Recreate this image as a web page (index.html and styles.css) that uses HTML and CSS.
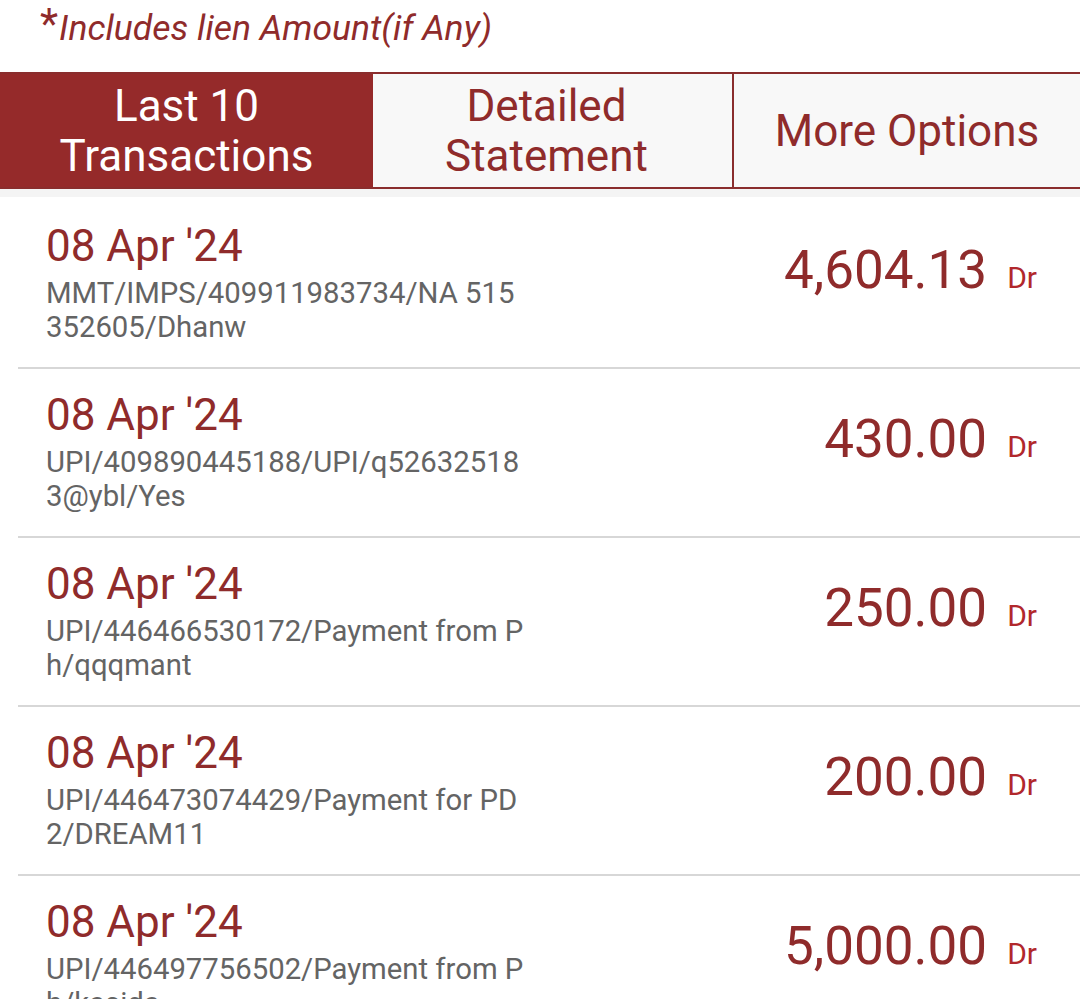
FILE: index.html
```html
<!DOCTYPE html>
<html>
<head>
<meta charset="utf-8">
<link rel="stylesheet" href="styles.css">
</head>
<body>
<div class="note"><span class="star">*</span><span class="note-text">Includes lien Amount(if Any)</span></div>
<div class="tabs">
  <div class="tab active">Last 10<br>Transactions</div>
  <div class="tab mid">Detailed<br>Statement</div>
  <div class="tab last">More Options</div>
</div>
<div class="strip"></div>
<div class="list">
  <div class="row">
    <div class="info">
      <div class="date">08 Apr '24</div>
      <div class="desc">MMT/IMPS/409911983734/NA 515 352605/Dhanw</div>
    </div>
    <div class="amt"><span class="val">4,604.13</span><span class="dr">Dr</span></div>
  </div>
  <div class="row">
    <div class="info">
      <div class="date">08 Apr '24</div>
      <div class="desc">UPI/409890445188/UPI/q526325183@ybl/Yes</div>
    </div>
    <div class="amt"><span class="val">430.00</span><span class="dr">Dr</span></div>
  </div>
  <div class="row">
    <div class="info">
      <div class="date">08 Apr '24</div>
      <div class="desc">UPI/446466530172/Payment from Ph/qqqmant</div>
    </div>
    <div class="amt"><span class="val">250.00</span><span class="dr">Dr</span></div>
  </div>
  <div class="row">
    <div class="info">
      <div class="date">08 Apr '24</div>
      <div class="desc">UPI/446473074429/Payment for PD2/DREAM11</div>
    </div>
    <div class="amt"><span class="val">200.00</span><span class="dr">Dr</span></div>
  </div>
  <div class="row">
    <div class="info">
      <div class="date">08 Apr '24</div>
      <div class="desc">UPI/446497756502/Payment from Ph/kasida</div>
    </div>
    <div class="amt"><span class="val">5,000.00</span><span class="dr">Dr</span></div>
  </div>
</div>
</body>
</html>
```
FILE: styles.css
```css
html, body {
  margin: 0;
  padding: 0;
  background: #ffffff;
  font-family: Roboto, "Noto Sans", sans-serif;
}

.note {
  height: 72px;
  padding-left: 40px;
  box-sizing: border-box;
  color: #8f2b2b;
  display: flex;
  align-items: flex-start;
}

.star {
  font-size: 42px;
  line-height: 42px;
  padding-top: 3px;
}

.note-text {
  font-style: italic;
  font-size: 35.5px;
  line-height: 40px;
  padding-top: 8px;
  margin-left: 1px;
}

.tabs {
  display: grid;
  grid-template-columns: 373px 359px 1fr;
  border-top: 2px solid #8a2d2d;
  border-bottom: 2px solid #8a2d2d;
  height: 117px;
  box-sizing: border-box;
}

.tab {
  display: flex;
  align-items: center;
  justify-content: center;
  text-align: center;
  font-size: 44px;
  line-height: 50px;
  color: #8f2b2b;
  background: #f8f8f8;
}

.tab.active {
  background: #952a2a;
  color: #ffffff;
}

.tab.mid {
  padding-right: 12px;
}

.tab.last {
  border-left: 2px solid #8a2d2d;
}

.strip {
  height: 8px;
  background: #f4f4f4;
}

.list {
  padding-top: 3px;
}

.row {
  margin-left: 18px;
  padding: 21px 43px 23px 28px;
  border-bottom: 2px solid #d7d7d7;
  display: flex;
  justify-content: space-between;
  align-items: flex-start;
}

.date {
  font-size: 44px;
  line-height: 50px;
  color: #8f2b2b;
}

.desc {
  margin-top: 5px;
  width: 482px;
  font-size: 29.3px;
  line-height: 34px;
  color: #646464;
  word-break: break-all;
}

.amt {
  margin-top: 19px;
  display: flex;
  align-items: baseline;
  gap: 20px;
}

.val {
  font-size: 53px;
  line-height: 60px;
  color: #8f2b2b;
}

.dr {
  font-size: 30px;
  color: #b1282c;
}
```
